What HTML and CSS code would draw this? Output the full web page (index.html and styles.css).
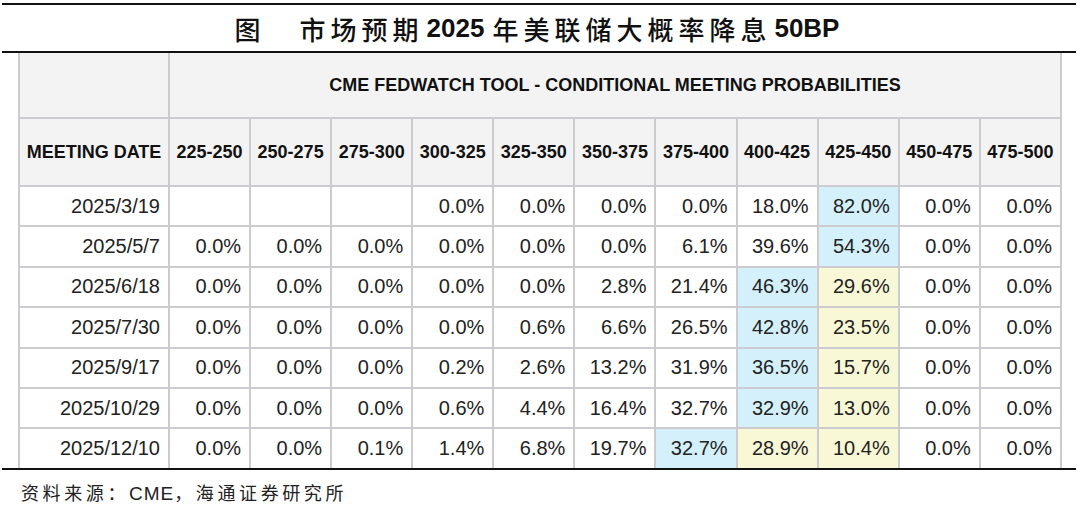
FILE: index.html
```html
<!DOCTYPE html>
<html lang="zh-CN">
<head>
<meta charset="utf-8">
<title>市场预期2025年美联储大概率降息50BP</title>
<link rel="stylesheet" href="styles.css">
</head>
<body>
<div class="figure">
  <div class="title">
    <span class="cjk fig-label">图</span><span class="cjk">市场预期</span><span class="num">2025</span><span class="cjk">年美联储大概率降息</span><span class="num">50BP</span>
  </div>
  <div class="table-wrap">
    <table class="grid">
      <colgroup>
        <col class="c-date">
        <col><col><col><col><col><col><col><col><col><col><col>
      </colgroup>
      <thead>
        <tr class="h1">
          <th></th>
          <th colspan="11">CME FEDWATCH TOOL - CONDITIONAL MEETING PROBABILITIES</th>
        </tr>
        <tr class="h2">
          <th>MEETING DATE</th>
          <th>225-250</th><th>250-275</th><th>275-300</th><th>300-325</th><th>325-350</th><th>350-375</th><th>375-400</th><th>400-425</th><th>425-450</th><th>450-475</th><th>475-500</th>
        </tr>
      </thead>
      <tbody>
        <tr><td>2025/3/19</td><td></td><td></td><td></td><td>0.0%</td><td>0.0%</td><td>0.0%</td><td>0.0%</td><td>18.0%</td><td class="blue">82.0%</td><td>0.0%</td><td>0.0%</td></tr>
        <tr><td>2025/5/7</td><td>0.0%</td><td>0.0%</td><td>0.0%</td><td>0.0%</td><td>0.0%</td><td>0.0%</td><td>6.1%</td><td>39.6%</td><td class="blue">54.3%</td><td>0.0%</td><td>0.0%</td></tr>
        <tr><td>2025/6/18</td><td>0.0%</td><td>0.0%</td><td>0.0%</td><td>0.0%</td><td>0.0%</td><td>2.8%</td><td>21.4%</td><td class="blue">46.3%</td><td class="yellow">29.6%</td><td>0.0%</td><td>0.0%</td></tr>
        <tr><td>2025/7/30</td><td>0.0%</td><td>0.0%</td><td>0.0%</td><td>0.0%</td><td>0.6%</td><td>6.6%</td><td>26.5%</td><td class="blue">42.8%</td><td class="yellow">23.5%</td><td>0.0%</td><td>0.0%</td></tr>
        <tr><td>2025/9/17</td><td>0.0%</td><td>0.0%</td><td>0.0%</td><td>0.2%</td><td>2.6%</td><td>13.2%</td><td>31.9%</td><td class="blue">36.5%</td><td class="yellow">15.7%</td><td>0.0%</td><td>0.0%</td></tr>
        <tr><td>2025/10/29</td><td>0.0%</td><td>0.0%</td><td>0.0%</td><td>0.6%</td><td>4.4%</td><td>16.4%</td><td>32.7%</td><td class="blue">32.9%</td><td class="yellow">13.0%</td><td>0.0%</td><td>0.0%</td></tr>
        <tr><td>2025/12/10</td><td>0.0%</td><td>0.0%</td><td>0.1%</td><td>1.4%</td><td>6.8%</td><td>19.7%</td><td class="blue">32.7%</td><td class="yellow">28.9%</td><td class="yellow">10.4%</td><td>0.0%</td><td>0.0%</td></tr>
      </tbody>
    </table>
  </div>
  <div class="source">资料来源：<span class="latin">CME</span>，海通证券研究所</div>
</div>
</body>
</html>
```

FILE: styles.css
```css
html, body {
  margin: 0;
  padding: 0;
  background: #ffffff;
}

.figure {
  width: 1074px;
  margin: 3px 0 0 2px;
}

.title {
  height: 46px;
  border-top: 2px solid #111;
  border-bottom: 2px solid #111;
  display: flex;
  align-items: center;
  justify-content: center;
  color: #111;
  padding-left: 4px;
}

.title .cjk {
  font-family: "Noto Sans CJK SC", sans-serif;
  font-size: 26px;
  font-weight: 500;
  letter-spacing: 5px;
}

.title .fig-label {
  margin-right: 34px;
}

.title .num {
  font-family: "Liberation Sans", Arial, sans-serif;
  font-size: 26px;
  font-weight: 700;
  margin: 0 8px 0 3px;
}

.table-wrap {
  border-bottom: 2px solid #111;
  padding-left: 16px;
}

.grid {
  border-collapse: collapse;
  table-layout: fixed;
  width: 1044px;
  font-family: "Liberation Sans", Arial, sans-serif;
}

.grid col.c-date {
  width: 150px;
}

.grid th,
.grid td {
  border: 2px solid #cbcbd0;
  padding: 0;
}

.grid th {
  background: #f3f3f3;
  color: #111;
  font-size: 18px;
  font-weight: 700;
  text-align: center;
}

.grid tr.h1 th {
  border-top: none;
  height: 64px;
  font-size: 18px;
}

.grid tr.h2 th {
  height: 66px;
}

.grid td {
  height: 38.4px;
  font-size: 20px;
  color: #222;
  text-align: right;
  padding-right: 8px;
}

.grid tbody tr:last-child td {
  border-bottom: none;
}

.grid td.blue {
  background: #d4f1fb;
}

.grid td.yellow {
  background: #f8f8d6;
}

.source {
  margin: 9px 0 0 19px;
  font-family: "Noto Sans CJK SC", sans-serif;
  font-size: 18px;
  font-weight: 400;
  letter-spacing: 3.6px;
  color: #222;
}

.source .latin {
  font-family: "Liberation Sans", Arial, sans-serif;
  font-size: 19px;
  letter-spacing: 1px;
}
```
